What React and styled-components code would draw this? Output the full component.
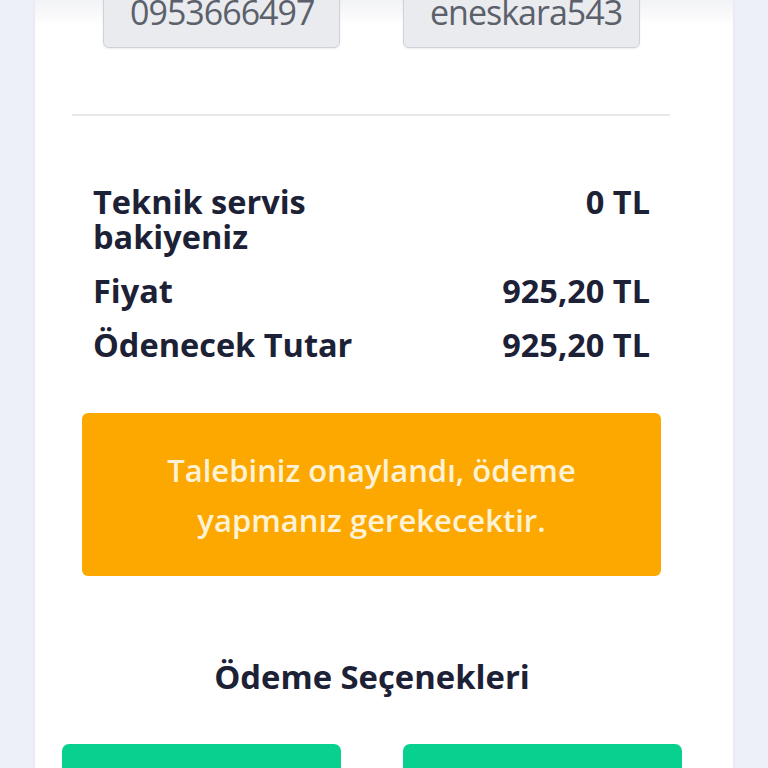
import styled, { createGlobalStyle } from 'styled-components';

const GlobalStyle = createGlobalStyle`
  html, body {
    margin: 0;
    padding: 0;
    background: #eef0f8;
    font-family: 'Open Sans', 'Noto Sans', sans-serif;
    overflow: hidden;
  }
`;

const Page = styled.div`
  height: 768px;
  padding: 0 35px;
  overflow: hidden;
`;

const Card = styled.div`
  width: 698px;
  height: 100%;
  box-sizing: border-box;
  background: linear-gradient(#f2f3f6 0, #ffffff 26px);
  box-shadow: 0 0 3px rgba(40, 50, 90, 0.08);
  padding: 0 51px 0 27px;
`;

const Content = styled.div`
  display: flex;
  flex-direction: column;
`;

const InputRow = styled.div`
  display: grid;
  grid-template-columns: 237px 237px;
  gap: 63px;
  padding: 0 42px 0 41px;
  margin-top: -14px;
`;

const Field = styled.div`
  height: 62px;
  box-sizing: border-box;
  display: flex;
  align-items: center;
  padding: 0 26px 11px;
  background: #e9ebef;
  border: 1px solid #cfd3d9;
  border-radius: 6px;
  box-shadow: 0 1px 2px rgba(0, 0, 0, 0.08);
  color: #5b606b;
  font-size: 34px;
  letter-spacing: -1px;
  white-space: nowrap;
  overflow: hidden;
`;

const Divider = styled.hr`
  border: none;
  height: 2px;
  background: #e6e8ec;
  margin: 66px 12px 0 10px;
`;

const Summary = styled.div`
  display: flex;
  flex-direction: column;
  gap: 19px;
  margin-top: 68px;
  padding: 0 32px 0 31px;
`;

const Row = styled.div`
  display: grid;
  grid-template-columns: 1fr 1fr;
  font-size: 32.5px;
  font-weight: 700;
  line-height: 35px;
  color: #1d2136;
`;

const Value = styled.span`
  text-align: right;
`;

const Notice = styled.div`
  margin: 51px 21px 0 20px;
  padding: 32px 20px 31px;
  background: #fca800;
  border-radius: 6px;
  color: #fdf2d6;
  font-size: 31px;
  font-weight: 600;
  line-height: 50px;
  text-align: center;
`;

const Heading = styled.h2`
  margin: 83px 0 0;
  font-size: 32.8px;
  font-weight: 700;
  line-height: 36px;
  color: #1d2136;
  text-align: center;
`;

const Options = styled.div`
  display: grid;
  grid-template-columns: 279px 279px;
  gap: 62px;
  margin-top: 49px;
`;

const OptionButton = styled.button`
  height: 64px;
  border: none;
  border-radius: 7px;
  background: #08d08f;
  cursor: pointer;
`;

const rows = [
  ['Teknik servis bakiyeniz', '0 TL'],
  ['Fiyat', '925,20 TL'],
  ['Ödenecek Tutar', '925,20 TL'],
];

export default function App() {
  return (
    <Page>
      <GlobalStyle />
      <Card>
        <Content>
          <InputRow>
            <Field>0953666497</Field>
            <Field>eneskara543</Field>
          </InputRow>
          <Divider />
          <Summary>
            {rows.map(([label, value]) => (
              <Row key={label}>
                <span>{label}</span>
                <Value>{value}</Value>
              </Row>
            ))}
          </Summary>
          <Notice>
            Talebiniz onaylandı, ödeme
            <br />
            yapmanız gerekecektir.
          </Notice>
          <Heading>Ödeme Seçenekleri</Heading>
          <Options>
            <OptionButton />
            <OptionButton />
          </Options>
        </Content>
      </Card>
    </Page>
  );
}
